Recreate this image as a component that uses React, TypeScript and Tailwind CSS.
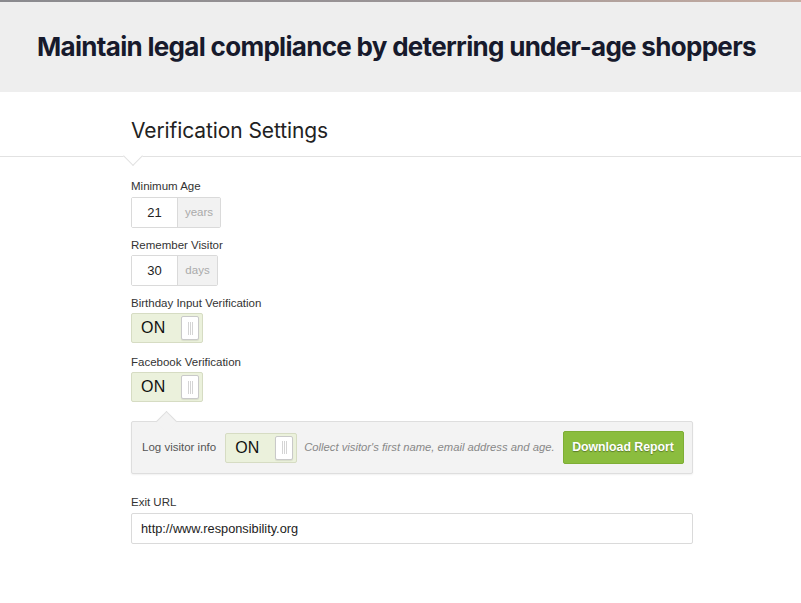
import React from "react";

function Toggle({ className = "" }: { className?: string }) {
  return (
    <div
      className={`shrink-0 flex items-center justify-between w-[72px] h-[30px] border border-[#d6dcc3] bg-[#ebf1dc] rounded-[2px] pl-[9px] pr-[3px] ${className}`}
    >
      <span className="text-[16px] text-[#111] font-medium tracking-[0.2px]" style={{ fontFamily: "'Liberation Sans', Arial, sans-serif" }}>
        ON
      </span>
      <div className="w-[18px] h-[24px] bg-white border border-[#c9c9c9] rounded-[2px] flex items-center justify-center gap-[1px] shadow-[0_1px_1px_rgba(0,0,0,0.08)]">
        <div className="w-px h-[13px] bg-[#d4d4d4]" />
        <div className="w-px h-[13px] bg-[#d4d4d4]" />
        <div className="w-px h-[13px] bg-[#d4d4d4]" />
      </div>
    </div>
  );
}

function AddonInput({ value, unit, unitW }: { value: string; unit: string; unitW: string }) {
  return (
    <div className="flex h-[31px] border border-[#dadada] rounded-[2px] w-fit">
      <div className="w-[45px] flex items-center justify-center text-[13px] text-[#222] bg-white">{value}</div>
      <div className={`${unitW} flex items-center justify-center text-[11.5px] text-[#aaa] bg-[#f2f2f2] border-l border-[#dadada]`}>
        {unit}
      </div>
    </div>
  );
}

export default function App() {
  const sans = { fontFamily: "'Liberation Sans', Arial, sans-serif" };
  return (
    <div className="w-[801px] h-[603px] bg-white overflow-hidden" style={sans}>
      <div className="h-[2px] bg-gradient-to-r from-[#8a8a8e] via-[#9a9496] to-[#c7ada2]" />
      <div className="h-[90px] bg-[#eeeeee] flex items-center justify-center pr-[8px]">
        <h1
          className="text-[26px] font-bold text-[#171a2c] tracking-[-0.7px] pb-[1px] whitespace-nowrap"
          style={{ fontFamily: "Inter, 'Liberation Sans', sans-serif" }}
        >
          Maintain legal compliance by deterring under-age shoppers
        </h1>
      </div>

      <div className="relative border-b border-[#e2e2e2]">
        <div
          className="ml-[131px] pt-[25px] pb-[11px] text-[21px] leading-[28px] text-[#222] tracking-[-0.1px]"
          style={{ fontFamily: "Inter, 'Liberation Sans', sans-serif" }}
        >
          Verification Settings
        </div>
        <div className="absolute left-[126px] bottom-[-7px] w-[14px] h-[14px] bg-white border-r border-b border-[#e2e2e2] rotate-45" />
      </div>

      <div className="ml-[131px] w-[562px] pt-[21px] text-[11.5px] text-[#333]">
        <div className="leading-[16px] mb-[3px]">Minimum Age</div>
        <AddonInput value="21" unit="years" unitW="w-[43px]" />

        <div className="leading-[16px] mt-[9px] mb-[2px]">Remember Visitor</div>
        <AddonInput value="30" unit="days" unitW="w-[40px]" />

        <div className="leading-[16px] mt-[9px] mb-[2px]">Birthday Input Verification</div>
        <Toggle />

        <div className="leading-[16px] mt-[11px] mb-[2px]">Facebook Verification</div>
        <Toggle />

        <div className="relative mt-[19px] border border-[#dedede] bg-[#f3f3f3] rounded-[2px] shadow-[0_1px_2px_rgba(0,0,0,0.06)] flex items-center pl-[10px] pr-[9px] py-[9px] whitespace-nowrap">
          <div className="absolute left-[27px] top-[-8px] w-[15px] h-[15px] bg-[#f3f3f3] border-l border-t border-[#dedede] rotate-45" />
          <span className="text-[11.5px] text-[#555] mr-[9px]">Log visitor info</span>
          <Toggle />
          <span className="italic text-[11.25px] text-[#888] ml-[7px] mr-[8px] flex-1">
            Collect visitor's first name, email address and age.
          </span>
          <button className="shrink-0 w-[121px] h-[33px] bg-[#8bbd3e] border border-[#7eae35] rounded-[2px] text-white font-bold text-[12.3px] [text-shadow:0_1px_1px_rgba(0,0,0,0.35)]">
            Download Report
          </button>
        </div>

        <div className="leading-[16px] mt-[20px] mb-[3px]">Exit URL</div>
        <div className="h-[31px] border border-[#dadada] rounded-[2px] flex items-center pl-[9px] text-[12.75px] text-[#222]">
          http://www.responsibility.org
        </div>
      </div>
    </div>
  );
}
